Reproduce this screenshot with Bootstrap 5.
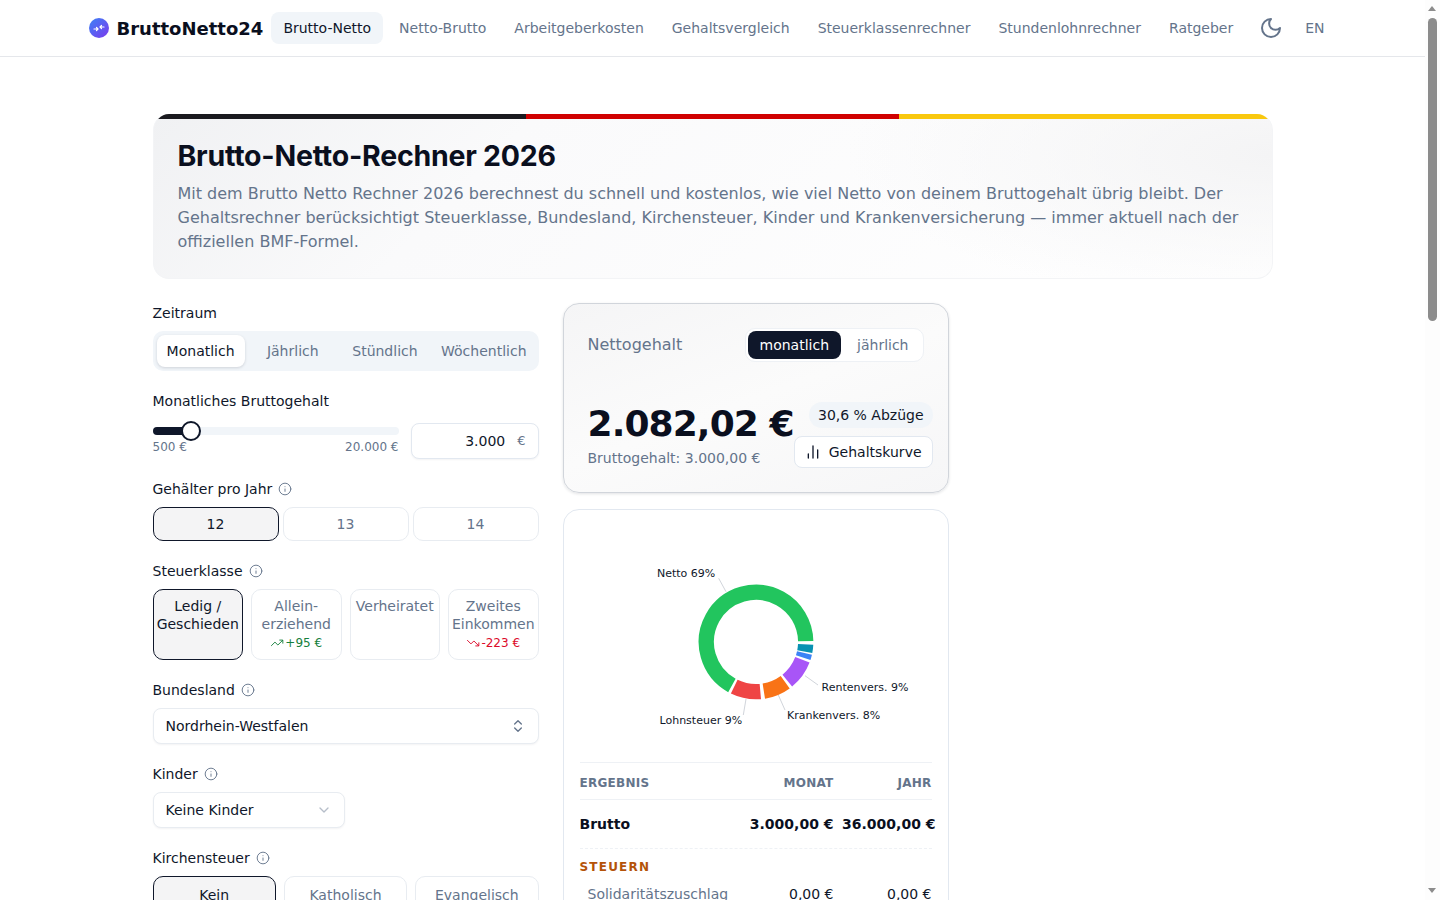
<!DOCTYPE html>
<html lang="de">
  <head>
    <meta charset="UTF-8" />
    <meta name="viewport" content="width=device-width, initial-scale=1.0" />
    <title>BruttoNetto24</title>
    <link href="https://cdn.jsdelivr.net/npm/bootstrap@5.3.2/dist/css/bootstrap.min.css" rel="stylesheet" />
    <style>
      body {
        font-family: "DejaVu Sans", sans-serif;
        font-size: 14px;
        color: #0f172a;
        background: #fff;
        margin-right: 15px;
      }
      .fake-scroll { position: fixed; top: 0; right: 0; bottom: 0; width: 15px; background: #fdfdfd; }
      .fake-thumb { position: absolute; top: 18px; left: 3px; width: 9px; height: 303px; background: #8c8c8c; border-radius: 5px; }
      .fake-arrow { position: absolute; left: 3px; width: 0; height: 0; border-left: 4.5px solid transparent; border-right: 4.5px solid transparent; }
      .fake-arrow.up { top: 6px; border-bottom: 5px solid #8c8c8c; }
      .fake-arrow.down { bottom: 7px; border-top: 5px solid #8c8c8c; }

      .site-head { height: 57px; border-bottom: 1px solid #e5e7eb; }
      .head-inner { max-width: 1280px; height: 56px; margin: 0 auto; padding: 0 16px; }
      .brand-name { font-size: 18px; font-weight: 700; color: #0a0f1e; }
      .brand-dot {
        width: 20px; height: 20px; border-radius: 50%;
        background: linear-gradient(135deg, #3b82f6, #7c3aed);
      }
      .top-link {
        padding: 0 12px; height: 32px; line-height: 32px;
        color: #64748b; text-decoration: none; border-radius: 8px; white-space: nowrap;
      }
      .top-link.is-on { background: #f1f5f9; color: #0f172a; }
      .head-links { gap: 4px; margin-left: 8px; }
      .moon-btn { width: 44px; height: 32px; margin-right: -4px; color: #64748b; }

      .page-wrap { width: 1120px; margin: 0 auto; padding-top: 57px; min-height: 2518px; }
      .hero-box {
        position: relative; overflow: hidden;
        border: 1px solid #f3f4f6; border-top: 0; border-radius: 16px;
        padding: 24px 24px 24px;
        margin-bottom: 24px;
        background:
          radial-gradient(ellipse 38% 90% at 100% 25%, #f4f4f5, rgba(244, 244, 245, 0)),
          linear-gradient(135deg, #f0f1f3 0%, #fafafb 30%, #fff 100%);
      }
      .flag-bar { position: absolute; top: 0; left: 0; right: 0; height: 5px; }
      .flag-bar span { flex: 1 1 0; }
      .hero-title {
        font-family: Inter, sans-serif; font-weight: 700; font-size: 28.5px; line-height: 36px;
        color: #0a0f1e; margin: 0 0 8px; letter-spacing: -.24px;
      }
      .hero-text { font-size: 16px; line-height: 24px; color: #64748b; margin: 0; }

      .calc-grid { display: grid; grid-template-columns: 386px 386px 300px; gap: 24px; }
      .field-block { margin-bottom: 20px; }
      .field-label { line-height: 20px; margin-bottom: 8px; gap: 6px; }
      .field-label svg { color: #64748b; }

      .seg-box { background: #f1f5f9; border-radius: 10px; padding: 4px; gap: 4px; height: 40px; }
      .seg-item { flex: 1 1 0; padding: 0 8px; line-height: 32px; text-align: center; color: #64748b; border-radius: 8px; white-space: nowrap; }
      .seg-item.is-on { background: #fff; color: #0f172a; box-shadow: 0 1px 3px rgba(15, 23, 42, .15); }

      .slider-col { width: 246px; padding-top: 4px; }
      .slider-track { position: relative; height: 8px; background: #f1f5f9; border-radius: 4px; }
      .slider-fill { height: 8px; background: #0f172a; border-radius: 4px; }
      .slider-thumb {
        position: absolute; top: -6px; width: 20px; height: 20px; margin-left: -10px;
        background: #fff; border: 2px solid #0f172a; border-radius: 50%;
      }
      .slider-ends { font-size: 12px; line-height: 16px; color: #64748b; margin-top: 4px; }
      .amount-box {
        width: 128px; height: 36px; padding: 0 12px;
        border: 1px solid #e2e8f0; border-radius: 8px; background: #fff;
        box-shadow: 0 1px 2px rgba(15, 23, 42, .05); gap: 12px;
      }
      .amount-box span { color: #64748b; font-size: 13px; }

      .choice-row { display: grid; gap: 4px; grid-template-columns: repeat(3, 1fr); }
      .choice-row.four-up { grid-template-columns: repeat(4, 1fr); gap: 8px; }
      .choice-row.wide-gap { gap: 8px; }
      .choice-btn {
        border: 1px solid #e8ecf1; border-radius: 10px; background: #fff; color: #64748b;
        padding: 7px 2px; line-height: 18px; text-align: center;
      }
      .choice-btn.is-on { background: #f4f4f5; border-color: #0f172a; color: #0f172a; }
      .four-up .choice-btn { height: 71px; }
      .wide-gap .choice-btn { padding-top: 9px; height: 56px; }
      .diff-line { font-size: 12px; line-height: 18px; margin-top: 1px; gap: 1px; }
      .diff-plus { color: #15803d; }
      .diff-minus { color: #dc0a2a; }

      .pick-box {
        height: 36px; padding: 0 12px;
        border: 1px solid #e8ecf1; border-radius: 8px; background: #fff;
        box-shadow: 0 1px 2px rgba(15, 23, 42, .05);
      }
      .pick-short { width: 192px; }

      .net-box {
        border: 1px solid #d1d5db; border-radius: 16px; padding: 24px; margin-bottom: 16px;
        height: 190px;
        background: linear-gradient(160deg, #f5f5f6 0%, #fbfbfb 50%, #f6f6f7 100%);
        box-shadow: 0 1px 3px rgba(15, 23, 42, .12);
      }
      .net-title { font-size: 16px; color: #64748b; }
      .unit-switch { height: 34px; border: 1px solid #eef1f5; border-radius: 10px; background: #fff; padding: 2px; gap: 4px; }
      .unit-item { line-height: 28px; padding: 0 12px; border-radius: 8px; color: #64748b; }
      .unit-item.is-on { background: #0f172a; color: #fff; }
      .net-lower { margin-top: 40px; white-space: nowrap; }
      .net-value { font-size: 36px; line-height: 40px; font-weight: 700; color: #0a0f1e; margin-bottom: 4px; letter-spacing: -.9px; }
      .net-sub { line-height: 20px; color: #64748b; }
      .cut-pill { height: 26px; line-height: 26px; padding: 0 9px; background: #f1f5f9; border-radius: 13px; }
      .curve-btn {
        height: 32px; padding: 0 10px; gap: 8px; background: #fff; color: #0f172a;
        border: 1px solid #e2e8f0; border-radius: 8px;
      }

      .result-box { border: 1px solid #e2e8f0; border-radius: 16px; padding: 16px; background: #fff; }
      .donut-chart { display: block; width: 352px; height: 236px; }
      .donut-chart text { font-family: "DejaVu Sans", sans-serif; font-size: 11px; fill: #0f172a; }
      .donut-chart line { stroke: #d1d5db; stroke-width: 1; }
      .res-row { display: grid; grid-template-columns: 1fr 100px 98px; align-items: center; }
      .res-row > :nth-child(n+2) { text-align: right; white-space: nowrap; }
      .res-head {
        height: 38px; padding-top: 3px; border-top: 1px solid #eef1f5; border-bottom: 1px solid #eef1f5;
        font-size: 12px; font-weight: 700; letter-spacing: .25px; color: #64748b;
      }
      .res-strong { height: 49px; font-weight: 700; border-bottom: 1px dashed #eef1f5; color: #0a0f1e; }
      .res-strong > :last-child { margin-right: -4px; }
      .res-group { font-size: 12px; font-weight: 700; letter-spacing: 1.2px; color: #b45309; line-height: 18px; margin-top: 9px; margin-bottom: 1px; }
      .res-line { height: 34px; padding-left: 8px; }
      .res-line > :first-child { color: #64748b; }
    </style>
  </head>
  <body>
    <header class="site-head">
      <div class="head-inner d-flex align-items-center">
        <div class="d-flex align-items-center gap-2">
          <span class="brand-dot d-flex align-items-center justify-content-center">
            <svg width="12" height="12" viewBox="0 0 12 12" fill="none" stroke="#fff" stroke-width="1.2" stroke-linecap="round">
              <path d="M1 7h4M3.500 5.500 5 7 3.500 8.500M11 5H7M8.500 3.500 7 5l1.500 1.500" />
            </svg>
          </span>
          <span class="brand-name">BruttoNetto24</span>
        </div>
        <nav class="head-links d-flex align-items-center">
          <a class="top-link is-on" href="#">Brutto-Netto</a>
          <a class="top-link" href="#">Netto-Brutto</a>
          <a class="top-link" href="#">Arbeitgeberkosten</a>
          <a class="top-link" href="#">Gehaltsvergleich</a>
          <a class="top-link" href="#">Steuerklassenrechner</a>
          <a class="top-link" href="#">Stundenlohnrechner</a>
          <a class="top-link" href="#">Ratgeber</a>
          <span class="moon-btn d-flex align-items-center justify-content-center">
            <svg width="24" height="24" viewBox="0 0 24 24" fill="none" stroke="currentColor" stroke-width="2" stroke-linecap="round" stroke-linejoin="round">
              <path d="M12 3a6 6 0 0 0 9 9 9 9 0 1 1-9-9Z" />
            </svg>
          </span>
          <a class="top-link" href="#">EN</a>
        </nav>
      </div>
    </header>

    <main class="page-wrap">
      <section class="hero-box">
        <div class="flag-bar d-flex">
          <span style="background: #1a1a1f"></span>
          <span style="background: #d00000"></span>
          <span style="background: #f9c80e"></span>
        </div>
        <h1 class="hero-title">Brutto-Netto-Rechner 2026</h1>
        <p class="hero-text">Mit dem Brutto Netto Rechner 2026 berechnest du schnell und kostenlos, wie viel Netto von deinem Bruttogehalt übrig bleibt. Der Gehaltsrechner berücksichtigt Steuerklasse, Bundesland, Kirchensteuer, Kinder und Krankenversicherung — immer aktuell nach der offiziellen BMF-Formel.</p>
      </section>

      <div class="calc-grid">
        <div>
          <div class="field-block">
            <div class="field-label">Zeitraum</div>
            <div class="seg-box d-flex">
              <div class="seg-item is-on">Monatlich</div>
              <div class="seg-item">Jährlich</div>
              <div class="seg-item">Stündlich</div>
              <div class="seg-item">Wöchentlich</div>
            </div>
          </div>

          <div class="field-block">
            <div class="field-label mb-1">Monatliches Bruttogehalt</div>
            <div class="d-flex justify-content-between pt-2">
              <div class="slider-col">
                <div class="slider-track">
                  <div class="slider-fill" style="width: 15.8%"></div>
                  <div class="slider-thumb" style="left: 15.8%"></div>
                </div>
                <div class="slider-ends d-flex justify-content-between"><span>500 €</span><span>20.000 €</span></div>
              </div>
              <div class="amount-box d-flex align-items-center justify-content-end">3.000 <span>€</span></div>
            </div>
          </div>

          <div class="field-block">
            <div class="field-label d-flex align-items-center">Gehälter pro Jahr
              <svg width="14" height="14" viewBox="0 0 24 24" fill="none" stroke="currentColor" stroke-width="1.6" stroke-linecap="round"><circle cx="12" cy="12" r="10" /><path d="M12 16v-4M12 8h.01" /></svg>
            </div>
            <div class="choice-row">
              <div class="choice-btn is-on">12</div>
              <div class="choice-btn">13</div>
              <div class="choice-btn">14</div>
            </div>
          </div>

          <div class="field-block">
            <div class="field-label d-flex align-items-center">Steuerklasse
              <svg width="14" height="14" viewBox="0 0 24 24" fill="none" stroke="currentColor" stroke-width="1.6" stroke-linecap="round"><circle cx="12" cy="12" r="10" /><path d="M12 16v-4M12 8h.01" /></svg>
            </div>
            <div class="choice-row four-up">
              <div class="choice-btn is-on">Ledig / Geschieden</div>
              <div class="choice-btn">Allein-<br />erziehend
                <div class="diff-line diff-plus d-flex align-items-center justify-content-center">
                  <svg width="14" height="14" viewBox="0 0 24 24" fill="none" stroke="currentColor" stroke-width="1.6"><path d="M22 7l-8.500 8.500-5-5L2 17M16 7h6v6" /></svg>+95 €
                </div>
              </div>
              <div class="choice-btn">Verheiratet</div>
              <div class="choice-btn">Zweites Einkommen
                <div class="diff-line diff-minus d-flex align-items-center justify-content-center">
                  <svg width="14" height="14" viewBox="0 0 24 24" fill="none" stroke="currentColor" stroke-width="1.6"><path d="M22 17l-8.500-8.500-5 5L2 7M16 17h6v-6" /></svg>-223 €
                </div>
              </div>
            </div>
          </div>

          <div class="field-block">
            <div class="field-label d-flex align-items-center">Bundesland
              <svg width="14" height="14" viewBox="0 0 24 24" fill="none" stroke="currentColor" stroke-width="1.6" stroke-linecap="round"><circle cx="12" cy="12" r="10" /><path d="M12 16v-4M12 8h.01" /></svg>
            </div>
            <div class="pick-box d-flex align-items-center justify-content-between">
              <span>Nordrhein-Westfalen</span>
              <svg width="16" height="16" viewBox="0 0 24 24" fill="none" stroke="#64748b" stroke-width="2" stroke-linecap="round" stroke-linejoin="round"><path d="m7 15 5 5 5-5M7 9l5-5 5 5" /></svg>
            </div>
          </div>

          <div class="field-block">
            <div class="field-label d-flex align-items-center">Kinder
              <svg width="14" height="14" viewBox="0 0 24 24" fill="none" stroke="currentColor" stroke-width="1.6" stroke-linecap="round"><circle cx="12" cy="12" r="10" /><path d="M12 16v-4M12 8h.01" /></svg>
            </div>
            <div class="pick-box pick-short d-flex align-items-center justify-content-between">
              <span>Keine Kinder</span>
              <svg width="16" height="16" viewBox="0 0 24 24" fill="none" stroke="#b6bec9" stroke-width="2" stroke-linecap="round" stroke-linejoin="round"><path d="m6 9 6 6 6-6" /></svg>
            </div>
          </div>

          <div class="field-block">
            <div class="field-label d-flex align-items-center">Kirchensteuer
              <svg width="14" height="14" viewBox="0 0 24 24" fill="none" stroke="currentColor" stroke-width="1.6" stroke-linecap="round"><circle cx="12" cy="12" r="10" /><path d="M12 16v-4M12 8h.01" /></svg>
            </div>
            <div class="choice-row wide-gap">
              <div class="choice-btn is-on">Kein</div>
              <div class="choice-btn">Katholisch</div>
              <div class="choice-btn">Evangelisch</div>
            </div>
          </div>
        </div>

        <div>
          <section class="net-box">
            <div class="d-flex justify-content-between align-items-center">
              <div class="net-title">Nettogehalt</div>
              <div class="unit-switch d-flex">
                <div class="unit-item is-on">monatlich</div>
                <div class="unit-item">jährlich</div>
              </div>
            </div>
            <div class="net-lower d-flex justify-content-between align-items-end">
              <div>
                <div class="net-value">2.082,02 €</div>
                <div class="net-sub">Bruttogehalt: 3.000,00 €</div>
              </div>
              <div class="d-flex flex-column align-items-end gap-2 flex-shrink-0">
                <div class="cut-pill">30,6 % Abzüge</div>
                <div class="curve-btn d-flex align-items-center">
                  <svg width="16" height="16" viewBox="0 0 24 24" fill="none" stroke="currentColor" stroke-width="2" stroke-linecap="round"><path d="M5 21v-6M12 21V3M19 21V9" /></svg>
                  Gehaltskurve
                </div>
              </div>
            </div>
          </section>

          <section class="result-box">
            <svg class="donut-chart" viewBox="580 526 352 236" fill="none">
              <g stroke-width="15.300">
                <circle cx="756" cy="642" r="49.700" pathLength="360" stroke="#22c55e" stroke-dasharray="240 120" transform="rotate(119 756 642)" />
                <circle cx="756" cy="642" r="49.700" pathLength="360" stroke="#0891b2" stroke-dasharray="8.500 351.500" transform="rotate(2.700 756 642)" />
                <circle cx="756" cy="642" r="49.700" pathLength="360" stroke="#3b82f6" stroke-dasharray="5.500 354.500" transform="rotate(12.800 756 642)" />
                <circle cx="756" cy="642" r="49.700" pathLength="360" stroke="#a855f7" stroke-dasharray="30 330" transform="rotate(21 756 642)" />
                <circle cx="756" cy="642" r="49.700" pathLength="360" stroke="#f97316" stroke-dasharray="27 333" transform="rotate(54 756 642)" />
                <circle cx="756" cy="642" r="49.700" pathLength="360" stroke="#ef4444" stroke-dasharray="31 329" transform="rotate(85 756 642)" />
              </g>
              <line x1="718.700" y1="578.300" x2="726" y2="591.700" />
              <line x1="805" y1="675.700" x2="818" y2="685" />
              <line x1="778.300" y1="695" x2="785" y2="710" />
              <line x1="746" y1="699" x2="743.300" y2="715" />
              <text x="657" y="577">Netto 69%</text>
              <text x="821.500" y="691">Rentenvers. 9%</text>
              <text x="787" y="719">Krankenvers. 8%</text>
              <text x="659.500" y="724">Lohnsteuer 9%</text>
            </svg>
            <div class="res-row res-head"><span>ERGEBNIS</span><span>MONAT</span><span>JAHR</span></div>
            <div class="res-row res-strong"><span>Brutto</span><span>3.000,00 €</span><span>36.000,00 €</span></div>
            <div class="res-group">STEUERN</div>
            <div class="res-row res-line"><span>Solidaritätszuschlag</span><span>0,00 €</span><span>0,00 €</span></div>
            <div class="res-row res-line"><span>Kirchensteuer</span><span>0,00 €</span><span>0,00 €</span></div>
            <div class="res-row res-line"><span>Lohnsteuer</span><span>281,16 €</span><span>3.373,92 €</span></div>
          </section>
        </div>
        <div></div>
      </div>
    </main>

    <div class="fake-scroll">
      <div class="fake-arrow up"></div>
      <div class="fake-thumb"></div>
      <div class="fake-arrow down"></div>
    </div>
  </body>
</html>
